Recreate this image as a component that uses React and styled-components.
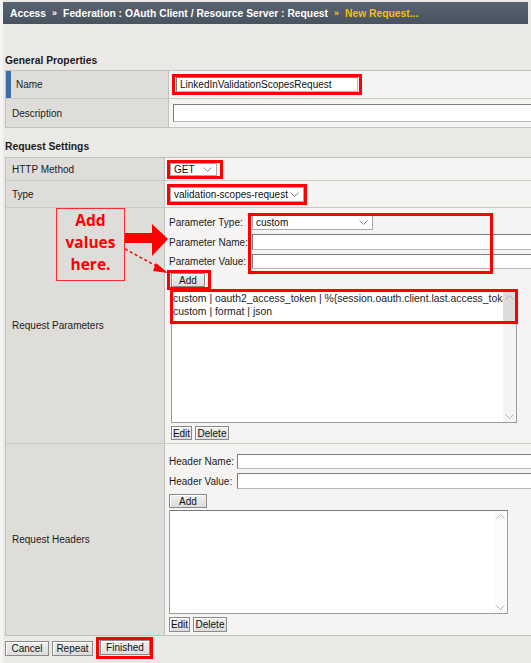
import React from "react";
import styled, { createGlobalStyle } from "styled-components";

const GlobalStyle = createGlobalStyle`
  *, *::before, *::after { box-sizing: border-box; }
  html, body { margin: 0; padding: 0; background: #f4f4f4; }
  body {
    font-family: "Liberation Sans", Arial, sans-serif;
    font-size: 10px;
    color: #1b1b1b;
    white-space: nowrap;
  }
`;

const Page = styled.div`
  width: 531px;
  height: 663px;
  overflow: hidden;
  background: #ebe9e5;
  border-left: 3px solid #f4f4f4;
`;

const Breadcrumb = styled.div`
  margin-top: 2px;
  width: 525px;
  height: 22px;
  display: flex;
  align-items: center;
  gap: 6px;
  padding-left: 7px;
  background: linear-gradient(#5a6470, #49535f);
  color: #fff;
  font-weight: bold;
  font-size: 10.3px;
`;

const Sep = styled.span`
  font-size: 9px;
  color: ${(p) => (p.$last ? "#f2c200" : "#fff")};
`;

const Current = styled.span`
  color: #f2c200;
`;

const Main = styled.div`
  padding-left: 2px;
`;

const SectionTitle = styled.div`
  margin-top: ${(p) => p.$top}px;
  height: ${(p) => p.$h}px;
  line-height: 14px;
  font-weight: bold;
  font-size: 10.3px;
`;

const FormTable = styled.div`
  width: 560px;
  border: 1px solid #c3c1bd;
  background: #f5f4f2;
`;

const Row = styled.div`
  display: grid;
  grid-template-columns: ${(p) => p.$label}px 1fr;
  height: ${(p) => p.$h}px;
  & + & {
    border-top: 1px solid #cac8c4;
  }
`;

const Label = styled.div`
  position: relative;
  z-index: 2;
  display: flex;
  align-items: center;
  padding-left: ${(p) => (p.$accent ? 5 : 6)}px;
  background: #dfddd9;
  border-right: 1px solid #c3c1bd;
  border-left: ${(p) => (p.$accent ? "5px solid #3d6ea8" : "none")};
`;

const Value = styled.div`
  display: flex;
  align-items: center;
  padding-left: ${(p) => p.$pl}px;
`;

const StackValue = styled.div`
  position: relative;
  padding: ${(p) => p.$pt}px 0 0 4px;
`;

const Highlight = styled.span`
  display: inline-flex;
  align-items: center;
  border: 3px solid #ff0000;
  padding: ${(p) => p.$pad || "0"};
  margin: ${(p) => p.$m || "0"};
`;

const TextInput = styled.input`
  width: ${(p) => p.$w}px;
  height: ${(p) => p.$h}px;
  margin: 0;
  padding: 0 3px;
  font: inherit;
  color: #111;
  background: #fff;
  border: 1px solid #b8b8b8;
  border-top-color: #7c7c7c;
  border-left-color: #7c7c7c;
  outline: none;
`;

const SelectBox = styled.div`
  display: flex;
  align-items: center;
  justify-content: space-between;
  width: ${(p) => p.$w}px;
  height: ${(p) => p.$h}px;
  padding: 0 4px 0 3px;
  background: #fff;
  border: 1px solid #a9a9a9;
  color: #111;
`;

const FieldGrid = styled.div`
  display: grid;
  grid-template-columns: ${(p) => p.$col}px auto;
  row-gap: 4px;
  align-items: center;
`;

const Btn = styled.button`
  width: ${(p) => p.$w}px;
  height: ${(p) => p.$h || 15}px;
  margin: 0;
  padding: 0;
  font: inherit;
  color: #111;
  background: linear-gradient(#f0f0f0, #dcdcdc);
  border: 1px solid #8a8a8a;
  box-shadow: inset 1px 1px 0 #fff;
`;

const BtnRow = styled.div`
  display: flex;
  align-items: center;
  gap: 3px;
  margin: ${(p) => p.$m || "0"};
`;

const ListBox = styled.div`
  display: flex;
  width: ${(p) => p.$w}px;
  height: ${(p) => p.$h}px;
  margin: ${(p) => p.$m || "0"};
  background: #fff;
  border: 1px solid #9c9c9c;
  border-top-color: #7a7a7a;
`;

const ListLines = styled.div`
  flex: 1;
  min-width: 0;
  overflow: hidden;
  padding-left: 1px;
  font-size: 10.4px;
  line-height: 13px;
`;

const ScrollBar = styled.div`
  width: 13px;
  flex: none;
  display: flex;
  flex-direction: column;
  justify-content: space-between;
  align-items: center;
  padding: 3px 0;
  background: ${(p) => (p.$thumb ? "linear-gradient(#dcdcdc 0, #dcdcdc 30px, #f4f4f4 30px)" : "#fbfbfb")};
`;

const RedFrame = styled.div`
  position: absolute;
  left: ${(p) => p.$x}px;
  top: ${(p) => p.$y}px;
  width: ${(p) => p.$w}px;
  height: ${(p) => p.$h}px;
  border: 3px solid #ff0000;
  pointer-events: none;
`;

const Note = styled.div`
  position: absolute;
  left: 50px;
  top: 0;
  width: 69px;
  height: 73px;
  border: 1px solid #ff2a2a;
  background: #dfddd9;
  color: #ff0000;
  font-family: "Open Sans", "Liberation Sans", sans-serif;
  font-weight: bold;
  font-size: 15.5px;
  line-height: 22px;
  text-align: center;
`;

const NoteArrows = styled.svg`
  position: absolute;
  left: 0;
  top: 0;
  overflow: visible;
`;

const Footer = styled.div`
  display: flex;
  align-items: center;
  gap: 3px;
  height: 24px;
`;

function Chevron({ color = "#8a8a8a", up = false }) {
  return (
    <svg width="9" height="5" viewBox="0 0 9 5">
      <path
        d={up ? "M0.5 4.5 L4.5 0.5 L8.5 4.5" : "M0.5 0.5 L4.5 4.5 L8.5 0.5"}
        fill="none"
        stroke={color}
        strokeWidth="1"
      />
    </svg>
  );
}

function Select({ w, h, children }) {
  return (
    <SelectBox $w={w} $h={h}>
      <span>{children}</span>
      <Chevron />
    </SelectBox>
  );
}

function Scroll({ thumb }) {
  return (
    <ScrollBar $thumb={thumb}>
      <Chevron color="#b0b0b0" up />
      <Chevron color="#b0b0b0" />
    </ScrollBar>
  );
}

export default function App() {
  return (
    <>
      <GlobalStyle />
      <Page>
        <Breadcrumb>
          <span>Access</span>
          <Sep>»</Sep>
          <span>Federation : OAuth Client / Resource Server : Request</span>
          <Sep $last>»</Sep>
          <Current>New Request...</Current>
        </Breadcrumb>

        <Main>
          <SectionTitle $top={30} $h={16}>General Properties</SectionTitle>
          <FormTable>
            <Row $label={163} $h={27}>
              <Label $accent>Name</Label>
              <Value $pl={3}>
                <Highlight $pad="0 1px">
                  <TextInput $w={182} $h={15} defaultValue="LinkedInValidationScopesRequest" />
                </Highlight>
              </Value>
            </Row>
            <Row $label={163} $h={29}>
              <Label>Description</Label>
              <Value $pl={4}>
                <TextInput $w={400} $h={18} />
              </Value>
            </Row>
          </FormTable>

          <SectionTitle $top={12} $h={17}>Request Settings</SectionTitle>
          <FormTable>
            <Row $label={159} $h={22}>
              <Label>HTTP Method</Label>
              <Value $pl={2}>
                <Highlight $pad="0 3px 0 0">
                  <Select w={47} h={13}>GET</Select>
                </Highlight>
              </Value>
            </Row>
            <Row $label={159} $h={27}>
              <Label>Type</Label>
              <Value $pl={2}>
                <Highlight>
                  <Select w={134} h={15}>validation-scopes-request</Select>
                </Highlight>
              </Value>
            </Row>
            <Row $label={159} $h={236}>
              <Label>
                Request Parameters
                <Note>
                  Add
                  <br />
                  values
                  <br />
                  here.
                </Note>
                <NoteArrows width="170" height="80">
                  <path d="M119 25 H146 V16 L162 31 L146 48 V35 H119 Z" fill="#ff0000" />
                  <line x1="119" y1="41" x2="154" y2="60" stroke="#ff0000" strokeWidth="1.5" strokeDasharray="3 2.5" />
                  <path d="M150 55 L162 65 L147 63 Z" fill="#ff0000" />
                </NoteArrows>
              </Label>
              <StackValue $pt={6}>
                <FieldGrid $col={83}>
                  <span>Parameter Type:</span>
                  <Select w={121} h={16}>custom</Select>
                  <span>Parameter Name:</span>
                  <TextInput $w={300} $h={16} />
                  <span>Parameter Value:</span>
                  <TextInput $w={300} $h={15} />
                </FieldGrid>
                <Highlight $pad="0 3px 0 1px" $m="1px 0 0 -2px">
                  <Btn $w={34} $h={14}>Add</Btn>
                </Highlight>
                <ListBox $w={346} $h={132} $m="1px 0 0 2px">
                  <ListLines>
                    custom | oauth2_access_token | %{"{"}session.oauth.client.last.access_token{"}"}
                    <br />
                    custom | format | json
                  </ListLines>
                  <Scroll thumb />
                </ListBox>
                <BtnRow $m="3px 0 0 2px">
                  <Btn $w={21} $h={14}>Edit</Btn>
                  <Btn $w={34} $h={14}>Delete</Btn>
                </BtnRow>
                <RedFrame $x={83} $y={5} $w={245} $h={61} />
                <RedFrame $x={5} $y={81} $w={348} $h={35} />
              </StackValue>
            </Row>
            <Row $label={159} $h={192}>
              <Label>Request Headers</Label>
              <StackValue $pt={10}>
                <FieldGrid $col={68}>
                  <span>Header Name:</span>
                  <TextInput $w={300} $h={15} />
                  <span>Header Value:</span>
                  <TextInput $w={300} $h={16} />
                </FieldGrid>
                <BtnRow $m="5px 0 0 0">
                  <Btn $w={38} $h={14}>Add</Btn>
                </BtnRow>
                <ListBox $w={339} $h={104} $m="2px 0 0 0">
                  <ListLines />
                  <Scroll />
                </ListBox>
                <BtnRow $m="3px 0 0 0">
                  <Btn $w={21} $h={15}>Edit</Btn>
                  <Btn $w={34} $h={15}>Delete</Btn>
                </BtnRow>
              </StackValue>
            </Row>
          </FormTable>

          <Footer>
            <Btn $w={44}>Cancel</Btn>
            <Btn $w={41}>Repeat</Btn>
            <Highlight $pad="0 0 1px 1px">
              <Btn $w={50}>Finished</Btn>
            </Highlight>
          </Footer>
        </Main>
      </Page>
    </>
  );
}
